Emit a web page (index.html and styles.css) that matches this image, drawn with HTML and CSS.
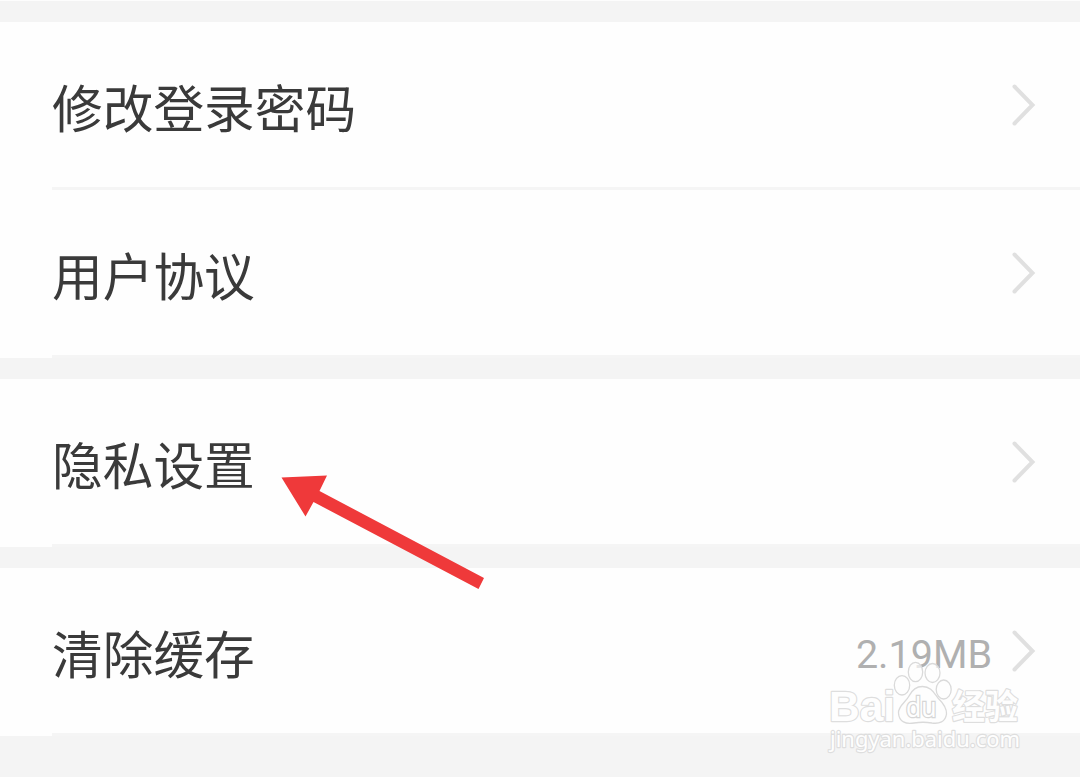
FILE: index.html
```html
<!DOCTYPE html>
<html lang="zh-CN">
<head>
<meta charset="utf-8">
<title>设置</title>
<link rel="stylesheet" href="styles.css">
</head>
<body>
<main class="settings">
  <section class="group">
    <div class="row"><span class="label">修改登录密码</span><svg class="chevron" viewBox="0 0 26 44"><path d="M4.500 3.500 22.500 22 4.500 40.500"/></svg></div>
    <div class="row"><span class="label">用户协议</span><svg class="chevron" viewBox="0 0 26 44"><path d="M4.500 3.500 22.500 22 4.500 40.500"/></svg></div>
  </section>
  <section class="group">
    <div class="row"><span class="label">隐私设置</span><svg class="chevron" viewBox="0 0 26 44"><path d="M4.500 3.500 22.500 22 4.500 40.500"/></svg></div>
  </section>
  <section class="group">
    <div class="row"><span class="label">清除缓存</span><span class="value">2.19MB</span><svg class="chevron" viewBox="0 0 26 44"><path d="M4.500 3.500 22.500 22 4.500 40.500"/></svg></div>
  </section>
  <svg class="arrow" viewBox="0 0 210 120"><path d="M1.500 7.500 47 5.500 39.500 21 204 108 198.500 119 33.500 32 25.500 46.500Z"/></svg>
  <svg class="watermark" viewBox="0 0 210 110">
    <g class="outline">
      <text class="brand" x="9" y="67" textLength="66" lengthAdjust="spacingAndGlyphs">Bai</text>
      <text class="brand-cn" x="132" y="65" textLength="66" lengthAdjust="spacingAndGlyphs">经验</text>
      <text class="site" x="10" y="92.500" textLength="190" lengthAdjust="spacingAndGlyphs">jingyan.baidu.com</text>
    </g>
    <g class="paw">
      <ellipse cx="82" cy="31.300" rx="7.700" ry="9.700"/>
      <ellipse cx="95.500" cy="18" rx="7.200" ry="9.700"/>
      <ellipse cx="112.500" cy="19" rx="7.500" ry="9.500"/>
      <ellipse cx="123.700" cy="35.500" rx="7.500" ry="9.500"/>
      <path d="M102.500 32.500C111 32.500 114 39 118 44C123 49 127 54 126.500 60C125.500 68 119 70 112 69C106 68 100 68 94 69C86 70.500 79 68 78.500 59C78 52 86 48 89 42C92 36 96 32.500 102.500 32.500Z"/>
    </g>
    <text class="du" x="86" y="62.500" textLength="30.500" lengthAdjust="spacingAndGlyphs">du</text>
  </svg>
</main>
</body>
</html>
```
FILE: styles.css
```css
body {
  margin: 0;
  background: #f4f4f4;
  overflow: hidden;
}

.settings {
  position: relative;
  box-sizing: border-box;
  height: 777px;
  padding-top: 21px;
  border-top: 1px solid #fdfdfd;
  display: flex;
  flex-direction: column;
  gap: 21px;
  font-family: "Noto Sans CJK SC", sans-serif;
}

.group {
  background: #fefefe;
}

.row {
  display: flex;
  align-items: center;
  box-sizing: border-box;
  height: 168px;
  padding: 0 44px 2px 52px;
  background: linear-gradient(#f5f5f5, #f5f5f5) 52px 100% / 100% 3px no-repeat;
}

.label {
  flex: 1;
  font-size: 50.700px;
  line-height: 74px;
  color: #3a3a3a;
  padding-top: 1px;
}

.value {
  font-family: Roboto, sans-serif;
  font-size: 39.500px;
  line-height: 48px;
  color: #b0b0b0;
  padding-top: 7px;
  margin-right: 18px;
}

.chevron {
  width: 26px;
  height: 44px;
  fill: none;
  stroke: #e0e0e0;
  stroke-width: 4;
  stroke-linecap: round;
}

.arrow {
  position: absolute;
  left: 280px;
  top: 469px;
  width: 210px;
  height: 120px;
  fill: #ef393a;
}

.watermark {
  position: absolute;
  left: 820px;
  top: 653px;
  width: 210px;
  height: 110px;
}

.brand {
  font: 700 43px "Liberation Sans", sans-serif;
}

.brand-cn {
  font: 700 34px "Noto Sans CJK SC", sans-serif;
}

.site {
  font: 400 22.500px "Noto Sans", sans-serif;
}

.outline {
  fill: #fefefe;
  stroke: #dedede;
  stroke-width: 2.400;
  stroke-linejoin: round;
  paint-order: stroke;
}

.paw {
  fill: #fefefe;
  fill-opacity: 0.700;
  stroke: #dadada;
  stroke-width: 1.300;
}

.du {
  font: 400 27px "Noto Sans", sans-serif;
  fill: #fefefe;
  stroke: #d6d6d6;
  stroke-width: 2.600;
  paint-order: stroke;
}
```
